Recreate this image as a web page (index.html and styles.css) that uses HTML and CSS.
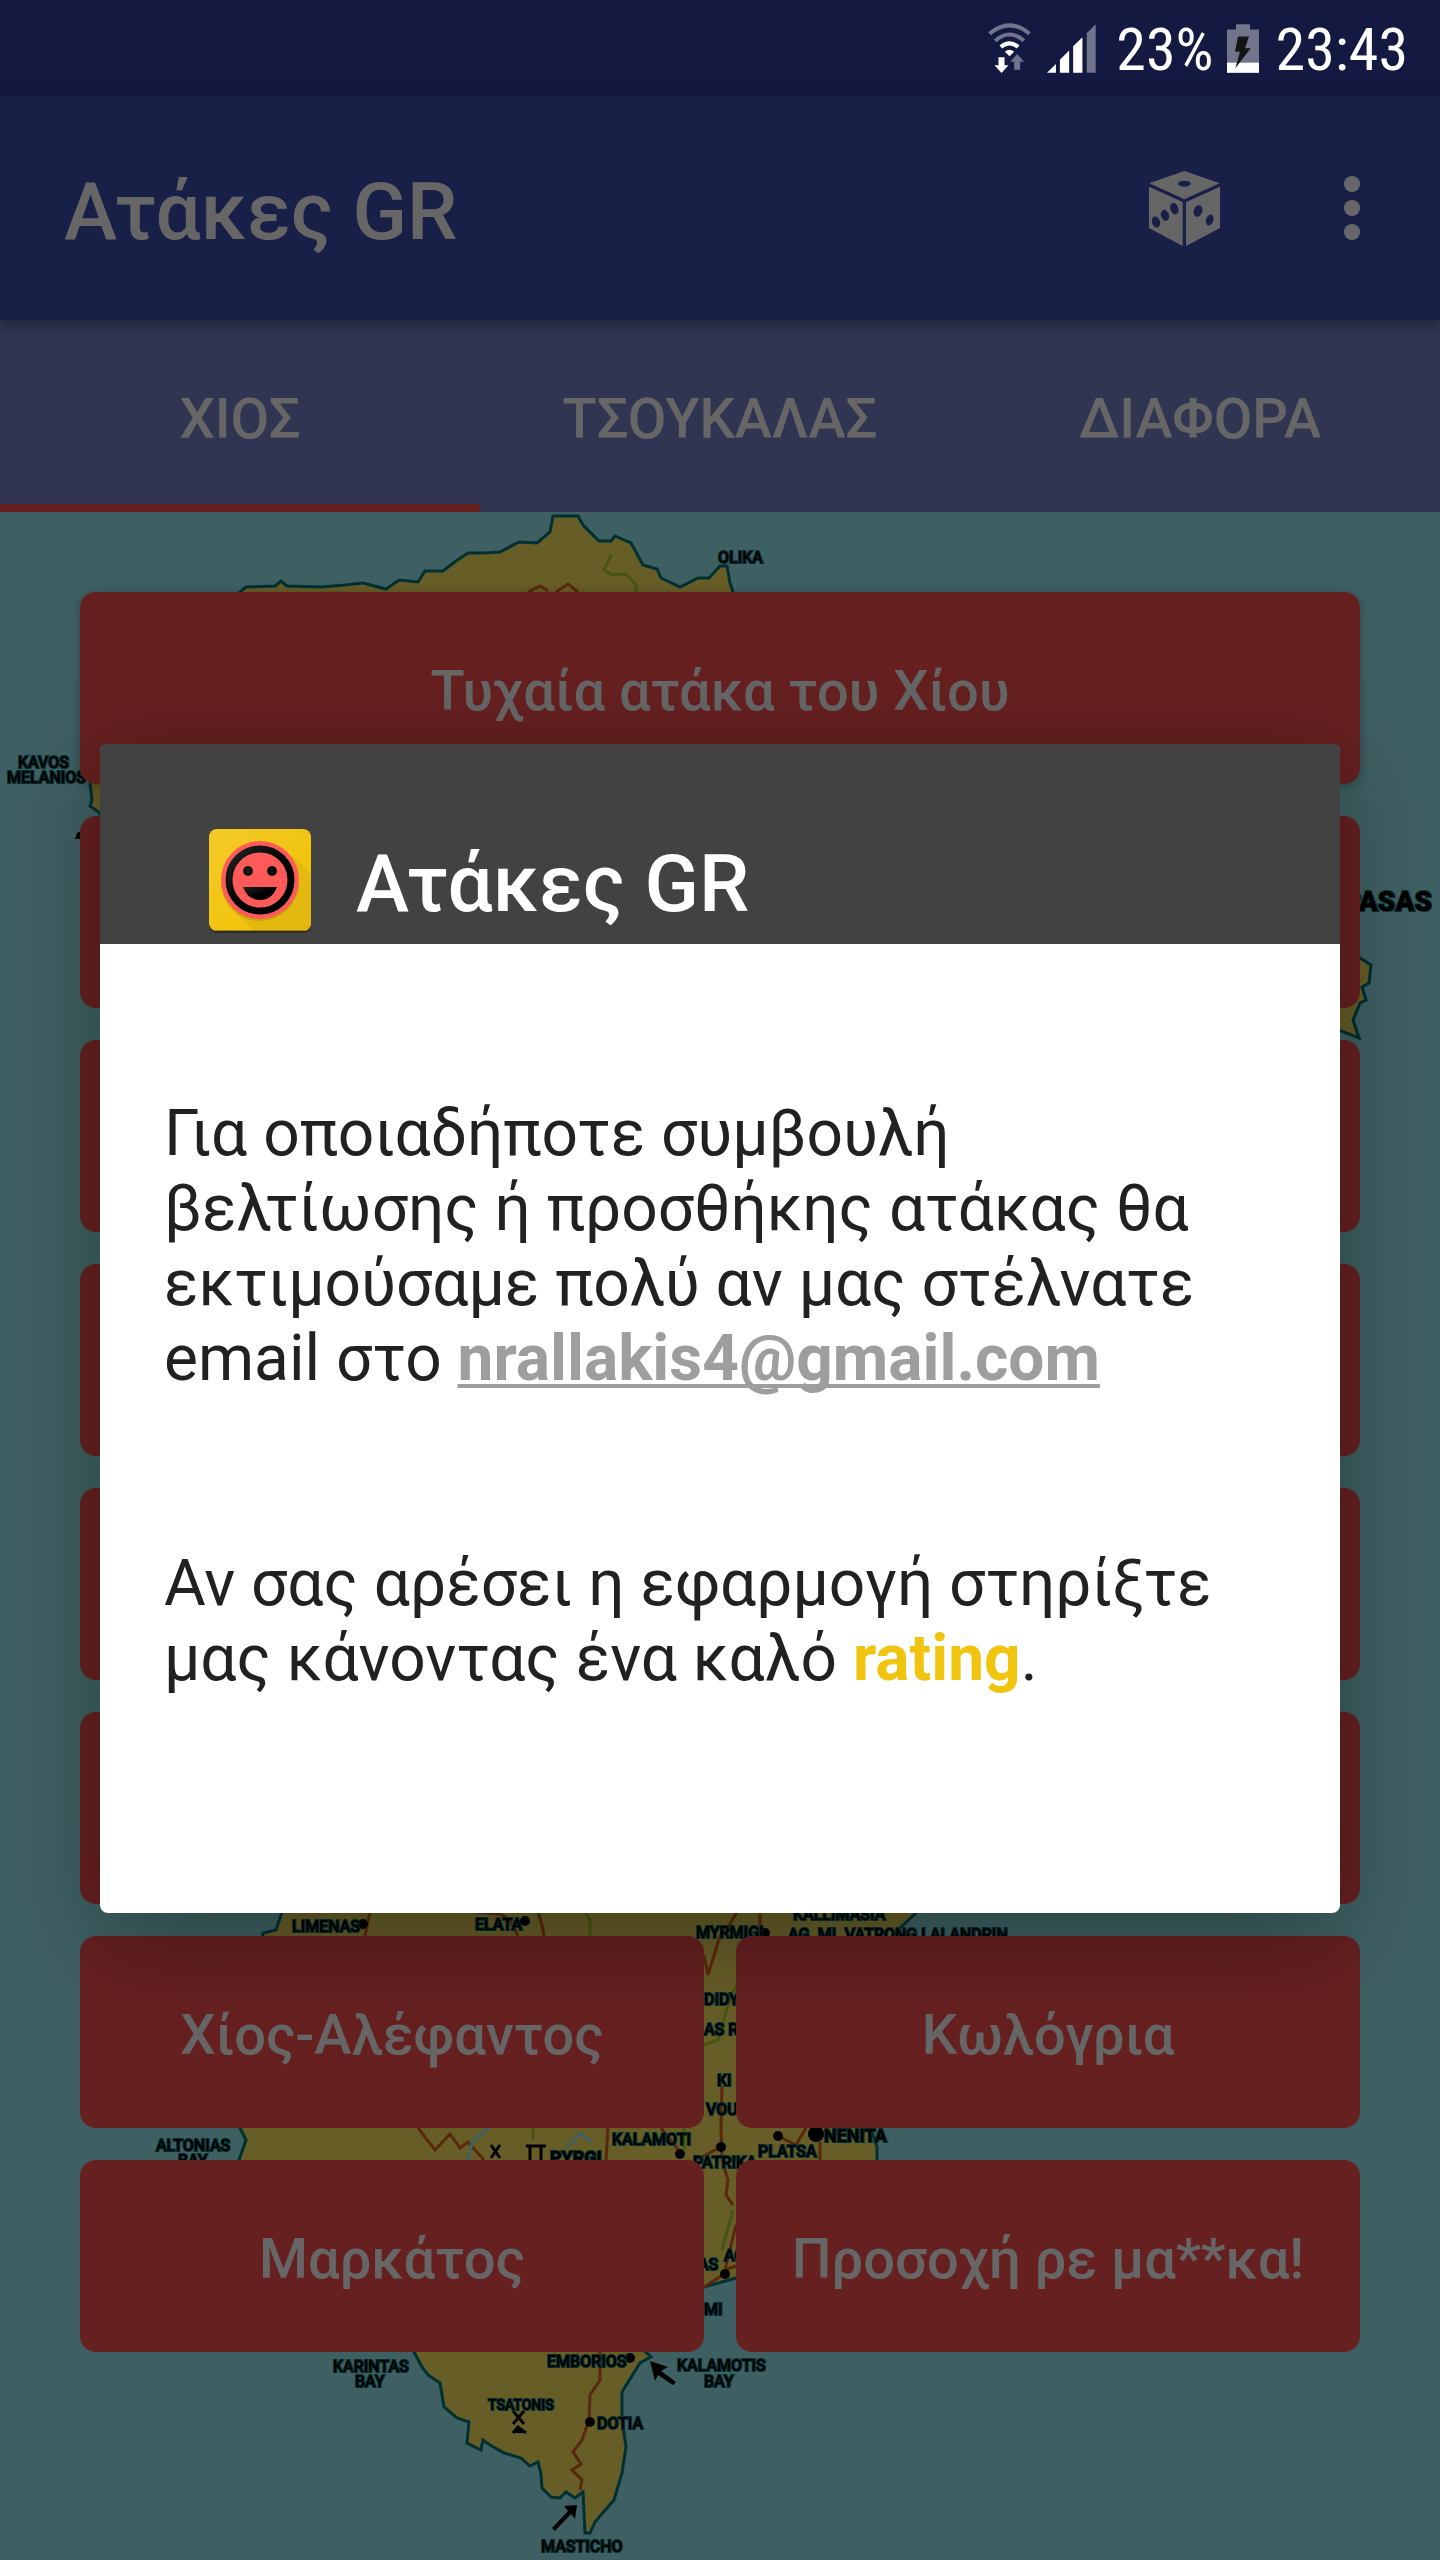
FILE: index.html
```html
<!DOCTYPE html>
<html lang="el">
<head>
<meta charset="utf-8">
<meta name="viewport" content="width=device-width, initial-scale=1">
<title>Ατάκες GR</title>
<link rel="stylesheet" href="styles.css">
</head>
<body>
<div class="status-bar">
  <svg class="status-wifi" viewBox="88 68 128 150" aria-hidden="true">
    <g fill="none" stroke-width="12">
      <path d="M92 100 Q152 50 212 100" stroke="#71748b"/>
      <path d="M109 121 Q152 84 195 121" stroke="#71748b"/>
      <path d="M126 140 Q152 118 178 140" stroke="#fff"/>
    </g>
    <path d="M138 154 Q152 142 166 154 L152 168Z" fill="#fff"/>
    <path d="M119 171h18v24h12l-21 23-21-23h12z" fill="#fff"/>
    <path d="M166 208h18v-24h12l-21-23-21 23h12z" fill="#71748b"/>
  </svg>
  <svg class="status-signal" viewBox="264 70 148 146" aria-hidden="true">
    <path d="M264 216 291 190V216Z M303 216V177L331 149V216Z M343 216V136L371 109V216Z" fill="#fff"/>
    <path d="M384 216V97L411 70V216Z" fill="#71748b"/>
  </svg>
  <span class="status-text status-percent">23%</span>
  <svg class="status-battery" viewBox="801 71 96 146" aria-hidden="true">
    <path d="M828 71h42v16h27v99h-96V87h27z" fill="#71748b"/>
    <path d="M801 186h96v31h-96z" fill="#fff"/>
    <path d="M834 108h33l-12 35h17l-46 60 14-49h-15z" fill="#141414"/>
  </svg>
  <time class="status-text">23:43</time>
</div>

<div class="screen">
  <header class="toolbar">
    <h1 class="title">Ατάκες GR</h1>
    <button class="icon-button" type="button" aria-label="Τυχαία ατάκα">
      <svg class="dice" viewBox="567 513 213 225" aria-hidden="true">
        <path d="M673 513 779 550 673 598 568 550Z M567 560 668 606V738L567 684Z M780 560 678 606V738L780 684Z" fill="#fff"/>
        <g fill="#3f51b5">
          <ellipse cx="673" cy="551" rx="19" ry="9"/>
          <ellipse cx="588" cy="666" rx="12" ry="17" transform="rotate(-18 588 666)"/>
          <ellipse cx="615" cy="646" rx="12" ry="17" transform="rotate(-18 615 646)"/>
          <ellipse cx="643" cy="626" rx="12" ry="18" transform="rotate(-18 643 626)"/>
          <ellipse cx="714" cy="633" rx="13" ry="18" transform="rotate(18 714 633)"/>
          <ellipse cx="749" cy="660" rx="11" ry="17" transform="rotate(18 749 660)"/>
        </g>
      </svg>
    </button>
    <button class="icon-button" type="button" aria-label="Μενού">
      <svg class="dots" viewBox="0 0 16 64" aria-hidden="true">
        <g fill="#fff"><circle cx="8" cy="8" r="8"/><circle cx="8" cy="32" r="8"/><circle cx="8" cy="56" r="8"/></g>
      </svg>
    </button>
  </header>

  <nav class="tabs">
    <a class="tab tab-active" href="#chios">ΧΙΟΣ</a>
    <a class="tab" href="#tsoukalas">ΤΣΟΥΚΑΛΑΣ</a>
    <a class="tab" href="#diafora">ΔΙΑΦΟΡΑ</a>
  </nav>

  <main class="content" id="chios">
    <svg class="map" viewBox="0 512 1440 2048" preserveAspectRatio="xMidYMin slice" aria-hidden="true">
      <g class="land">
        <path d="M100 813 90 806 92 800 90 784 160 700 240 592 246 587 275 586 281 581 287 586 321 587 345 585 363 583 386 589 399 580 418 582 425 571 443 571 456 561 468 553 485 553 500 552 519 542 537 543 550 532 553 516 578 516 583 525 599 541 611 541 615 536 631 543 643 565 657 569 661 578 680 587 698 578 709 578 720 566 727 566 730 583 733 592 900 760 1300 940 1360 958 1371 965 1369 983 1362 987 1366 1000 1360 1003 1353 1020 1359 1038 1339 1030 1100 1400 917 1912 901 1927 892 1936 850 2040 871 2128 877 2147 877 2160 820 2240 736 2278 704 2287 670 2320 646 2352 651 2357 640 2363 622 2392 622 2420 626 2447 622 2473 614 2500 595 2522 590 2533 585 2533 583 2492 575 2498 566 2492 560 2498 551 2497 542 2488 541 2474 538 2462 530 2466 521 2458 504 2453 490 2445 483 2440 481 2450 467 2443 469 2422 457 2418 444 2407 440 2383 428 2375 422 2367 414 2352 300 2240 239 2160 246 2140 240 2128 255 1990 263 1933 276 1930 282 1912 200 1400Z"/>
      </g>
      <g class="road">
        <path d="M528 592 540 586 548 591 M556 592 568 584 578 592 M370 1912 365 1936 M475 1912 500 1914 510 1920 518 1936 M538 1912 542 1925 544 1936 M737 1912 730 1924 720 1936 708 1975 704 1955 M760 1912V1936 M722 2086 721 2128 722 2160 728 2180 726 2195 733 2205 M418 2128 435 2150 450 2134 460 2148 468 2142 484 2160 M608 2128 606 2160 M661 2128 680 2152 M696 2160 721 2147 M806 2128 796 2145 778 2136 M820 2142V2160 M736 2225 724 2274 704 2287 M724 2270 736 2266 M600 2352 600 2380 590 2395 589 2420 582 2440 573 2452 581 2464 572 2470 582 2480 580 2490"/>
      </g>
      <g class="trail">
        <path d="M611 555 604 570 612 575 626 574 636 585 636 592 M585 1912 590 1920 590 1936 M736 1985 725 2015 718 2040 704 2045 M533 2128V2140 M684 2128V2150 M733 2210 722 2250"/>
      </g>
      <g class="river">
        <path d="M488 2128 472 2142 468 2160 M566 2148 580 2134 592 2142"/>
      </g>
      <g class="town">
        <circle cx="363" cy="1924" r="5"/><circle cx="525" cy="1921" r="5"/><circle cx="765" cy="1933" r="5"/>
        <circle cx="680" cy="2154" r="5"/><circle cx="721" cy="2147" r="5"/><circle cx="778" cy="2136" r="5"/>
        <circle cx="816" cy="2134" r="8"/><circle cx="725" cy="2274" r="5"/><circle cx="630" cy="2358" r="5"/><circle cx="590" cy="2422" r="5"/>
        <path d="M650 2361 668 2367 661 2371 676 2382 673 2385 658 2375 655 2381Z M577 2505 564 2506 568 2511 552 2528 555 2531 571 2514 575 2519Z M75 839 77 833 81 831 81 839Z"/>
        <path d="M491 2145 500 2158 M500 2145 491 2158 M526 2146H546 M530 2146V2160 M541 2146V2160 M513 2411 524 2424 M524 2411 513 2424 M513 2433 518 2427 526 2433" stroke="#000" stroke-width="3"/>
      </g>
      <g class="label">
        <text x="718" y="563">OLIKA</text>
        <text x="18" y="768">KAVOS</text>
        <text x="7" y="783">MELANIOS</text>
        <text class="label-big" x="1432" y="911" text-anchor="end">PASAS</text>
        <text x="292" y="1932">LIMENAS</text>
        <text x="475" y="1930">ELATA</text>
        <text x="696" y="1938">MYRMIGI</text>
        <text x="793" y="1920">KALLIMASIA</text>
        <text x="788" y="1940">AG. MI. VATRONG LALANDRIN</text>
        <text x="704" y="2005">DIDYMA</text>
        <text x="704" y="2035">AS RO</text>
        <text x="717" y="2086">KI</text>
        <text x="706" y="2115">VOU</text>
        <text x="156" y="2151">ALTONIAS</text>
        <text x="178" y="2166">BAY</text>
        <text class="label-town" x="550" y="2164">PYRGI</text>
        <text x="612" y="2145">KALAMOTI</text>
        <text x="693" y="2168">PATRIKA</text>
        <text x="758" y="2157">PLATSA</text>
        <text class="label-town" x="824" y="2142">NENITA</text>
        <text x="698" y="2270">AS</text>
        <text x="724" y="2261">AG</text>
        <text x="704" y="2315">MI</text>
        <text x="333" y="2372">KARINTAS</text>
        <text x="355" y="2387">BAY</text>
        <text x="547" y="2367">EMBORIOS</text>
        <text x="677" y="2371">KALAMOTIS</text>
        <text x="704" y="2387">BAY</text>
        <text class="label-small" x="488" y="2410">TSATONIS</text>
        <text x="597" y="2429">DOTIA</text>
        <text x="541" y="2552">MASTICHO</text>
      </g>
    </svg>

    <div class="cards">
      <button class="card card-wide card-raised" type="button">Τυχαία ατάκα του Χίου</button>
      <button class="card card-wide" type="button" aria-label="Ατάκα 1"></button>
      <button class="card card-wide" type="button" aria-label="Ατάκα 2"></button>
      <button class="card card-wide" type="button" aria-label="Ατάκα 3"></button>
      <button class="card card-wide" type="button" aria-label="Ατάκα 4"></button>
      <button class="card card-wide" type="button" aria-label="Ατάκα 5"></button>
      <button class="card" type="button">Χίος-Αλέφαντος</button>
      <button class="card" type="button">Κωλόγρια</button>
      <button class="card" type="button">Μαρκάτος</button>
      <button class="card" type="button">Προσοχή ρε μα**κα!</button>
    </div>
  </main>

  <div class="overlay">
    <dialog class="about" open aria-labelledby="about-title">
      <div class="about-header">
        <svg class="app-icon" viewBox="0 0 128 128" aria-hidden="true">
          <defs>
            <linearGradient id="tile" x1="0" y1="0" x2="1" y2="1">
              <stop offset="0" stop-color="#f4ca28"/><stop offset=".6" stop-color="#f1c40f"/><stop offset="1" stop-color="#efc20e"/>
            </linearGradient>
            <linearGradient id="ink" x1="0" y1="0" x2="1" y2="1">
              <stop offset="0" stop-color="#242424"/><stop offset=".55" stop-color="#000"/>
            </linearGradient>
            <clipPath id="tile-clip"><rect x="13" y="13" width="102" height="102" rx="8"/></clipPath>
          </defs>
          <rect x="13" y="15" width="102" height="102" rx="8" fill="#2c2c2c"/>
          <g clip-path="url(#tile-clip)">
            <rect x="13" y="13" width="102" height="102" fill="url(#tile)"/>
            <path d="M95 38 115 58V115H58L36 93Z" fill="#e3b90f"/>
            <path d="M13 114H115V115H13Z" fill="#a88808"/>
          </g>
          <circle cx="64" cy="66" r="39" fill="#b5930c" opacity=".6"/>
          <circle cx="64" cy="64" r="39" fill="#ff5a5a"/>
          <circle cx="64" cy="64" r="31" fill="none" stroke="url(#ink)" stroke-width="7"/>
          <circle cx="52" cy="55" r="5" fill="#161616"/>
          <circle cx="76" cy="55" r="5" fill="#0a0a0a"/>
          <path d="M47 71H81Q76 84 64 84T47 71Z" fill="url(#ink)"/>
        </svg>
        <h2 class="title" id="about-title">Ατάκες GR</h2>
      </div>
      <div class="about-body">
        <p>Για οποιαδήποτε συμβουλή βελτίωσης ή προσθήκης ατάκας θα εκτιμούσαμε πολύ αν μας στέλνατε email στο <a class="mail" href="mailto:nrallakis4@gmail.com">nrallakis4@gmail.com</a></p>
        <p>Αν σας αρέσει η εφαρμογή στηρίξτε μας κάνοντας ένα καλό <a class="rating" href="#rating">rating</a>.</p>
      </div>
    </dialog>
  </div>
</div>
</body>
</html>
```
FILE: styles.css
```css
* {
  box-sizing: border-box;
}

body {
  display: flex;
  flex-direction: column;
  min-height: 100vh;
  margin: 0;
  font-family: Roboto, "Noto Sans", sans-serif;
  color: #fff;
  background: #131940;
}

button {
  border: 0;
  font: inherit;
  color: inherit;
  cursor: pointer;
}

a {
  color: inherit;
  text-decoration: none;
}

svg {
  display: block;
}

.status-bar {
  position: relative;
  z-index: 1;
  display: flex;
  align-items: center;
  justify-content: flex-end;
  height: 96px;
  padding-right: 32px;
  font-family: "Roboto Condensed", "Liberation Sans Narrow", Roboto, sans-serif;
  font-size: 60px;
  line-height: 92px;
  background: #131940;
}

.status-text {
  padding-top: 4px;
}

.status-wifi {
  width: 43px;
  height: 50px;
  margin-right: 16px;
}

.status-signal {
  width: 49px;
  height: 49px;
  margin-right: 20px;
}

.status-percent {
  margin-right: 13px;
}

.status-battery {
  width: 32px;
  height: 49px;
  margin-right: 17px;
}

.screen {
  position: relative;
  display: flex;
  flex: 1;
  flex-direction: column;
}

.toolbar {
  z-index: 1;
  display: flex;
  align-items: center;
  height: 224px;
  padding: 0 40px 0 64px;
  background: #3f51b5;
  box-shadow: 0 4px 16px rgba(0, 0, 0, 0.4);
}

.title {
  margin: 0;
  padding-top: 8px;
  font-size: 80px;
  font-weight: 500;
  line-height: 96px;
}

.toolbar .title {
  flex: 1;
}

.icon-button {
  display: flex;
  align-items: center;
  justify-content: center;
  width: 96px;
  height: 96px;
  padding: 0;
  background: none;
}

.icon-button + .icon-button {
  margin-left: 72px;
}

.dice {
  width: 71px;
  height: 75px;
}

.dots {
  width: 16px;
  height: 64px;
}

.tabs {
  display: grid;
  grid-template-columns: repeat(3, 1fr);
  background: #7986cb;
}

.tab {
  height: 192px;
  padding-top: 3px;
  font-size: 56px;
  font-weight: 500;
  line-height: 192px;
  text-align: center;
}

.tab-active {
  box-shadow: inset 0 -8px #ff5252;
}

.content {
  display: grid;
  flex: 1;
  background: #9ef0f7;
}

.map,
.cards {
  grid-area: 1 / 1;
}

.map {
  width: 100%;
  height: 100%;
  min-height: 0;
  contain: size;
}

.land {
  fill: #ffe861;
  stroke: #00787d;
  stroke-width: 3px;
}

.road,
.trail,
.river {
  fill: none;
  stroke-width: 3px;
}

.road {
  stroke: #e06420;
}

.trail {
  stroke: #b4d228;
}

.river {
  stroke: #9ef0f7;
}

.label {
  font-size: 16px;
  font-weight: 500;
  font-family: "Liberation Sans Narrow", Roboto, sans-serif;
  stroke: #00787d;
  stroke-width: 2px;
  paint-order: stroke;
}

.label-small {
  font-size: 14px;
}

.label-town {
  font-family: Roboto, sans-serif;
  font-size: 18px;
  font-weight: 700;
}

.label-big {
  font-family: Roboto, sans-serif;
  font-size: 28px;
  font-weight: 900;
}

.cards {
  display: grid;
  grid-template-columns: 1fr 1fr;
  align-content: start;
  gap: 32px;
  padding: 80px;
  z-index: 0;
}

.card {
  height: 192px;
  padding: 6px 0 0;
  border-radius: 16px;
  background: #ff5252;
  font-size: 56px;
  font-weight: 500;
}

.card-wide {
  grid-column: 1 / -1;
}

.card-raised {
  box-shadow: 0 2px 12px rgba(0, 0, 0, 0.3);
}

.overlay {
  position: absolute;
  inset: 0;
  z-index: 2;
  display: flex;
  align-items: center;
  justify-content: center;
  padding: 0 100px;
  background: rgba(0, 0, 0, 0.6);
}

.about {
  position: static;
  width: 100%;
  max-width: none;
  margin: 0;
  padding: 0;
  border: 0;
  border-radius: 8px;
  color: #212121;
  background: #fff;
  box-shadow: 0 24px 96px rgba(0, 0, 0, 0.32);
}

.about-header {
  display: flex;
  align-items: center;
  gap: 32px;
  padding: 72px 96px 0;
  border-radius: 6px 6px 0 0;
  color: #fff;
  background: #424242;
}

.app-icon {
  width: 128px;
  height: 128px;
}

.about-body {
  padding: 152px 64px 217px;
  font-size: 64px;
  line-height: 75px;
}

.about-body p {
  margin: 0;
}

.about-body p + p {
  margin-top: 150px;
}

.mail {
  color: #9e9e9e;
  font-weight: 700;
  text-decoration: underline;
  text-decoration-thickness: 4px;
  text-decoration-skip-ink: none;
  text-underline-offset: 4px;
}

.rating {
  color: #f1c40f;
  font-weight: 700;
}
```
